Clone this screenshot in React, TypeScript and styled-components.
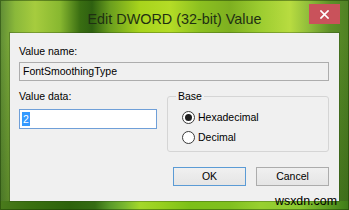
import React from "react";
import styled, { createGlobalStyle } from "styled-components";

const Global = createGlobalStyle`
  html, body { margin: 0; padding: 0; background: #4f8024; }
  body { font-family: "Liberation Sans", Arial, sans-serif; }
  * { box-sizing: border-box; }
`;

const Frame = styled.div`
  position: relative;
  width: 349px;
  height: 210px;
  padding: 0 10px 9px 10px;
  display: flex;
  flex-direction: column;
  overflow: hidden;
  background-image:
    linear-gradient(90deg, #4a7a1c 0px, #3a7010 30px, #2d620c 70px, #356c14 95px, #5a9a2a 110px, #7ab830 125px, #a4d82a 140px, #98d020 160px, #7cc018 190px, #80c020 230px, #98d030 260px, #8ac830 300px, #5a9a20 330px, #3e7a18 349px),
    linear-gradient(180deg, rgba(0,0,0,0) 40px, rgba(10,50,0,0.25) 200px),
    linear-gradient(90deg, #5f8c35 0px, #8ab83a 15px, #a6cc3e 35px, #88b830 60px, #3a6e12 80px, #2e6010 92px, #6a9e1e 110px, #a8d41c 140px, #b4dc26 170px, #8cc020 200px, #7eb020 230px, #9ccc30 260px, #b8dc40 290px, #8cba3a 310px, #5e9028 330px, #4f8024 349px);
  background-size: 100% 9px, 100% 100%, 100% 100%;
  background-position: 0 100%, 0 0, 0 0;
  background-repeat: no-repeat;
  box-shadow: inset 0 0 0 1px rgba(20, 50, 0, 0.45);
`;

const TitleBar = styled.div`
  height: 33px;
  display: grid;
  grid-template-columns: 1fr auto 1fr;
  align-items: start;
`;

const Title = styled.div`
  grid-column: 2;
  margin-top: 10px;
  font-size: 14.4px;
  line-height: 18px;
  color: #1f3012;
  white-space: nowrap;
`;

const CloseButton = styled.div`
  grid-column: 3;
  justify-self: end;
  margin-top: 4px;
  margin-right: -1px;
  width: 31px;
  height: 20px;
  background: #c9525b;
  display: flex;
  align-items: center;
  justify-content: center;
`;

const Panel = styled.div`
  flex: 1;
  background: #f0f0f0;
  padding: 12px 10px 15px 9px;
  display: flex;
  flex-direction: column;
  box-shadow: 0 0 0 1px rgba(40, 70, 20, 0.35);
  font-size: 10.5px;
  line-height: 13px;
  color: #000;
`;

const Label = styled.div`
  white-space: nowrap;
`;

const ReadOnlyField = styled.div`
  margin-top: 4px;
  height: 19px;
  border: 1px solid #adadad;
  background: #f0f0f0;
  padding: 0 3px;
  display: flex;
  align-items: center;
  white-space: nowrap;
`;

const Row = styled.div`
  margin-top: 9px;
  display: flex;
  gap: 10px;
  align-items: flex-start;
`;

const LeftCol = styled.div`
  width: 138px;
  display: flex;
  flex-direction: column;
`;

const EditField = styled.div`
  margin-top: 6px;
  height: 20px;
  border: 1px solid #6f9fd8;
  background: #fff;
  padding: 0 2px;
  display: flex;
  align-items: center;
`;

const Selected = styled.span`
  background: #3399ff;
  color: #fff;
  padding: 0 1px;
  line-height: 14px;
`;

const GroupBox = styled.fieldset`
  flex: 1;
  margin: 0;
  height: 62px;
  border: 1px solid #d5d5d5;
  border-radius: 3px;
  padding: 4px 0 4px 0;
  min-width: 0;
`;

const Legend = styled.legend`
  margin-left: 8px;
  padding: 0 2px;
  line-height: 13px;
`;

const RadioRow = styled.div`
  height: 20px;
  padding-left: 14px;
  display: flex;
  align-items: center;
  gap: 3px;
`;

const RadioCircle = styled.span<{ $checked?: boolean }>`
  width: 13px;
  height: 13px;
  border-radius: 50%;
  border: 1px solid #3a3a3a;
  background: #fff;
  display: flex;
  align-items: center;
  justify-content: center;
  &::after {
    content: "";
    width: 7px;
    height: 7px;
    border-radius: 50%;
    background: ${(p) => (p.$checked ? "#1e1e1e" : "transparent")};
  }
`;

const ButtonRow = styled.div`
  margin-top: 15px;
  display: flex;
  justify-content: flex-end;
  gap: 10px;
`;

const Button = styled.div<{ $default?: boolean }>`
  width: 73px;
  height: 19px;
  border: 1px solid ${(p) => (p.$default ? "#5b9bd5" : "#acacac")};
  background: linear-gradient(#f0f0f0, #e5e5e5);
  display: flex;
  align-items: center;
  justify-content: center;
`;

const Watermark = styled.div`
  position: absolute;
  left: 275px;
  top: 194px;
  font-size: 12.4px;
  line-height: 14px;
  color: #000;
  white-space: nowrap;
`;

export default function App() {
  return (
    <>
      <Global />
      <Frame>
        <TitleBar>
          <Title>Edit DWORD (32-bit) Value</Title>
          <CloseButton>
            <svg width="9" height="9" viewBox="0 0 9 9">
              <path d="M1 1 L8 8 M8 1 L1 8" stroke="#fff" strokeWidth="1.7" strokeLinecap="square" />
            </svg>
          </CloseButton>
        </TitleBar>
        <Panel>
          <Label>Value name:</Label>
          <ReadOnlyField>FontSmoothingType</ReadOnlyField>
          <Row>
            <LeftCol>
              <Label>Value data:</Label>
              <EditField>
                <Selected>2</Selected>
              </EditField>
            </LeftCol>
            <GroupBox>
              <Legend>Base</Legend>
              <RadioRow>
                <RadioCircle $checked />
                <span>Hexadecimal</span>
              </RadioRow>
              <RadioRow>
                <RadioCircle />
                <span>Decimal</span>
              </RadioRow>
            </GroupBox>
          </Row>
          <ButtonRow>
            <Button $default>OK</Button>
            <Button>Cancel</Button>
          </ButtonRow>
        </Panel>
        <Watermark>wsxdn.com</Watermark>
      </Frame>
    </>
  );
}
